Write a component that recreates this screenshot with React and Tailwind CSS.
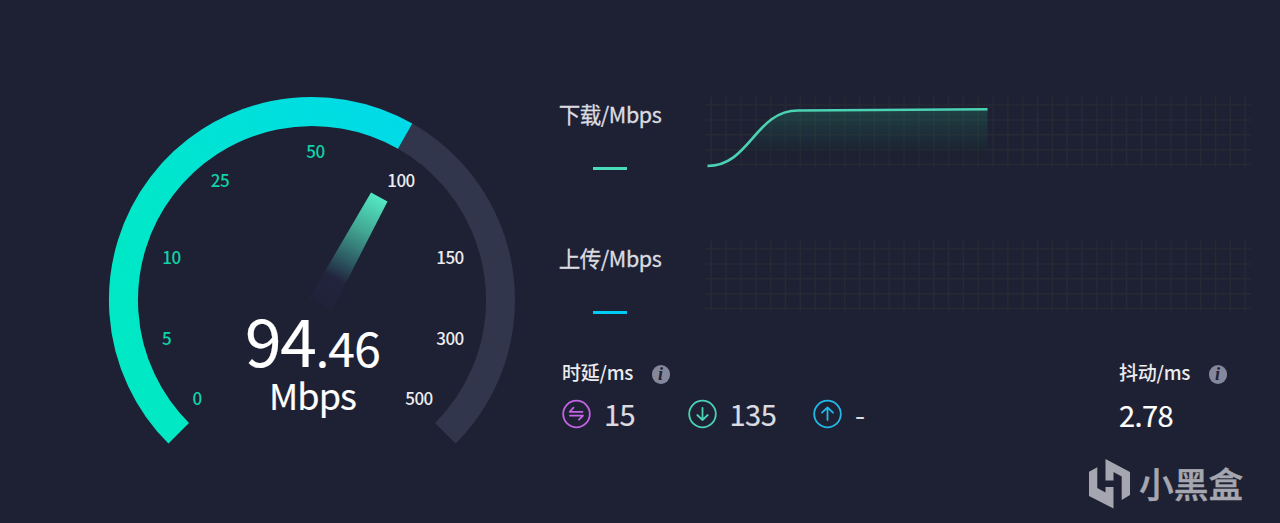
const FONT = "font-['Noto_Sans_CJK_SC',sans-serif]";

const TICKS = [
  { value: "0", x: 197, y: 405, active: true },
  { value: "5", x: 166.5, y: 344.5, active: true },
  { value: "10", x: 171.5, y: 264, active: true },
  { value: "25", x: 220, y: 187, active: true },
  { value: "50", x: 315.5, y: 158, active: true },
  { value: "100", x: 401, y: 187, active: false },
  { value: "150", x: 450, y: 264, active: false },
  { value: "300", x: 450, y: 344.5, active: false },
  { value: "500", x: 419, y: 405, active: false },
];

const COLS = Array.from({ length: 37 }, (_, i) => 6.3 + i * 14.83);
const ROWS = Array.from({ length: 5 }, (_, i) => 8 + i * 14.9);

function Gauge() {
  return (
    <svg width="559" height="523" viewBox="0 0 559 523" className="shrink-0">
      <defs>
        <linearGradient id="arc" gradientUnits="userSpaceOnUse" x1="109" y1="340" x2="412" y2="130">
          <stop offset="0" stopColor="#00e8c4" />
          <stop offset="0.35" stopColor="#00e6cc" />
          <stop offset="1" stopColor="#00dae9" />
        </linearGradient>
        <linearGradient id="needle" gradientUnits="userSpaceOnUse" x1="379" y1="197" x2="321" y2="305">
          <stop offset="0" stopColor="#53e8c4" />
          <stop offset="0.3" stopColor="#42a893" />
          <stop offset="0.6" stopColor="#2b5460" />
          <stop offset="0.76" stopColor="#22233c" />
          <stop offset="1" stopColor="#20223a" />
        </linearGradient>
      </defs>
      <path d="M 178.7 433.3 A 188.5 188.5 0 1 1 445.3 433.3" fill="none" stroke="#32364c" strokeWidth="29" />
      <path d="M 178.7 433.3 A 188.5 188.5 0 0 1 405.1 136.1" fill="none" stroke="url(#arc)" strokeWidth="29" />
      <polygon points="371,192.5 387.5,201.5 332,310 309,298.5" fill="url(#needle)" />
      {TICKS.map((t) => (
        <text
          key={t.value}
          x={t.x}
          y={t.y}
          textAnchor="middle"
          className={`text-[17px] font-medium tracking-[-0.5px] ${t.active ? "fill-[#0fd3a9]" : "fill-[#ececf0]"}`}
        >
          {t.value}
        </text>
      ))}
      <text x="312.5" y="367" textAnchor="middle" className="fill-white stroke-white stroke-[0.2px] text-[66px] tracking-[-1.2px]">
        94<tspan className="text-[48px] tracking-[-0.8px]">.46</tspan>
      </text>
      <text x="312.5" y="410" textAnchor="middle" className="fill-white stroke-white stroke-[0.2px] text-[36px] tracking-[-0.9px]">
        Mbps
      </text>
    </svg>
  );
}

function Chart({ active }) {
  return (
    <svg width="547" height="72" viewBox="0 0 547 72" className="shrink-0">
      <defs>
        <linearGradient id="area" x1="0" y1="0" x2="0" y2="1">
          <stop offset="0" stopColor="#229a78" stopOpacity="0.26" />
          <stop offset="0.75" stopColor="#14242c" stopOpacity="0.25" />
          <stop offset="1" stopColor="#14202a" stopOpacity="0" />
        </linearGradient>
      </defs>
      <g stroke="#262a34" strokeWidth="1.5">
        {COLS.map((x) => (
          <line key={x} x1={x} x2={x} y1="0" y2="70" />
        ))}
        {ROWS.map((y) => (
          <line key={y} x1="0" x2="546" y1={y} y2={y} />
        ))}
      </g>
      {active && (
        <>
          <path d="M 2.5 69 C 45 69 50 13.5 93 13.5 L 282.5 12.3 V 69 Z" fill="url(#area)" />
          <path d="M 2.5 69 C 45 69 50 13.5 93 13.5 L 282.5 12.3" fill="none" stroke="#4ad2b2" strokeWidth="2.6" />
        </>
      )}
    </svg>
  );
}

function SpeedRow({ label, bar, active }) {
  return (
    <div className="flex h-[144px]">
      <div className="flex w-[102px] flex-col items-center">
        <div className="mt-[2px] text-[21.5px] leading-[30px] tracking-[-0.4px] whitespace-nowrap text-[#dcdce0] [-webkit-text-stroke:0.3px]">
          {label}
        </div>
        <div className={`mt-[38px] h-[3px] w-[34px] ${bar}`} />
      </div>
      <div className="ml-[44px]">
        <Chart active={active} />
      </div>
    </div>
  );
}

function Info() {
  return (
    <span className="mt-[4px] flex h-[19px] w-[18px] items-center justify-center rounded-full bg-[#85889c] font-['Liberation_Serif',serif] text-[18px] leading-none font-bold text-[#1f2235] italic">
      i
    </span>
  );
}

function StatTitle({ label }) {
  return (
    <div className="flex h-[30px] items-center">
      <span className="w-[89.5px] text-[19px] leading-[26px] font-medium tracking-[-0.25px] text-[#ececf0]">{label}</span>
      <Info />
    </div>
  );
}

function Stat({ color, value, children }) {
  return (
    <div className="flex w-[125.5px] items-center">
      <svg
        width="29"
        height="30"
        viewBox="0 0 29 30"
        fill="none"
        stroke={color}
        strokeWidth="1.8"
        strokeLinecap="round"
        strokeLinejoin="round"
      >
        <circle cx="14.5" cy="15" r="13.3" />
        {children}
      </svg>
      <span className="-mt-0.5 ml-[13px] text-[29px] leading-[30px] tracking-[-0.5px] text-[#dcdce0] [-webkit-text-stroke:0.2px]">
        {value}
      </span>
    </div>
  );
}

function Watermark() {
  return (
    <div className="absolute top-[459px] left-[1089px] flex text-[#a5a6af]">
      <svg width="42" height="50" viewBox="0 0 42 50" fill="currentColor">
        <path d="M0 12.7 L8.3 8.3 V29 L16.5 33.5 V28 H24.5 V49.5 L0 37 Z" />
        <path d="M16.5 0 L41 13 V36 L32.7 41 V17.5 L24.5 13 V21.5 H16.5 Z" />
      </svg>
      <span className="-mt-px ml-2 text-[34.7px] leading-[50px] font-medium whitespace-nowrap [-webkit-text-stroke:0.5px]">
        小黑盒
      </span>
    </div>
  );
}

export default function App() {
  return (
    <div className={`relative flex h-[523px] w-[1280px] overflow-hidden bg-[#1e2133] ${FONT}`}>
      <Gauge />
      <div className="flex-1 pt-[97px]">
        <SpeedRow label="下载/Mbps" bar="bg-[#48dcb8]" active />
        <SpeedRow label="上传/Mbps" bar="bg-[#00cdf5]" />
        <div className="-mt-[28px] ml-[3px] flex">
          <div className="w-[557px]">
            <StatTitle label="时延/ms" />
            <div className="mt-[12px] flex">
              <Stat color="#c463e6" value="15">
                <path d="M11.5 8.7 L7.7 12.8 H20.5 M8 16.7 H21 L17 20.7" />
              </Stat>
              <Stat color="#4ad2b2" value="135">
                <path d="M14.5 9 V21 M9.3 16 L14.5 21 L19.7 16" />
              </Stat>
              <Stat color="#22b8e8" value="-">
                <path d="M14.5 21 V8.5 M9 13.7 L14.5 8.5 L20 13.7" />
              </Stat>
            </div>
          </div>
          <div>
            <StatTitle label="抖动/ms" />
            <div className="mt-[12px] text-[29px] leading-[30px] tracking-[-0.6px] text-white [-webkit-text-stroke:0.2px]">
              2.78
            </div>
          </div>
        </div>
      </div>
      <Watermark />
    </div>
  );
}
